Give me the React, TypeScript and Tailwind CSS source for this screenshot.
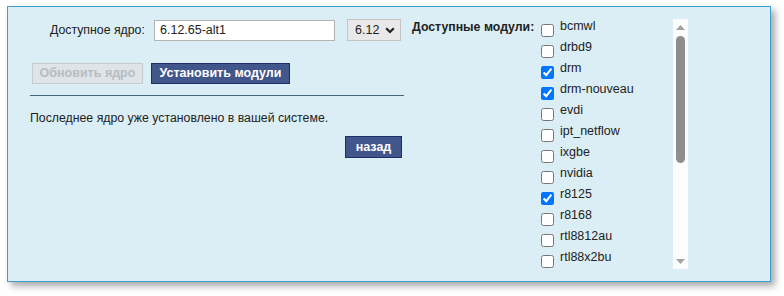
import { useState } from 'react'

const modules = [
  { name: 'bcmwl', on: false },
  { name: 'drbd9', on: false },
  { name: 'drm', on: true },
  { name: 'drm-nouveau', on: true },
  { name: 'evdi', on: false },
  { name: 'ipt_netflow', on: false },
  { name: 'ixgbe', on: false },
  { name: 'nvidia', on: false },
  { name: 'r8125', on: true },
  { name: 'r8168', on: false },
  { name: 'rtl8812au', on: false },
  { name: 'rtl88x2bu', on: false },
]

function Scrollbar() {
  return (
    <div className="flex w-[15px] shrink-0 flex-col items-center bg-[#fcfcfc]">
      <div className="flex h-[17px] w-full items-center justify-center">
        <svg width="9" height="5" viewBox="0 0 9 5"><path d="M4.5 0 L9 5 L0 5 Z" fill="#a3a3a3" /></svg>
      </div>
      <div className="flex-1 w-full px-[3px] pt-[1px] pb-[90px]">
        <div className="h-[127px] w-[9px] rounded-full bg-[#8e8e8e]" />
      </div>
      <div className="flex h-[17px] w-full items-center justify-center">
        <svg width="9" height="5" viewBox="0 0 9 5"><path d="M0 0 L9 0 L4.5 5 Z" fill="#a3a3a3" /></svg>
      </div>
    </div>
  )
}

export default function App() {
  const [checked, setChecked] = useState(modules.map((m) => m.on))

  return (
    <div className="h-[296px] w-[784px] bg-white pl-[7px] pt-[6px] font-['Liberation_Sans',Arial,sans-serif] text-[12.3px] text-[#222]">
      <div className="flex h-[276px] w-[764px] border border-[#3f9fd0] bg-[#dbeef5] shadow-[4px_4px_7px_rgba(0,0,0,0.35)]">
        {/* left column */}
        <div className="ml-[22px] mt-[12px] flex w-[374px] shrink-0 flex-col">
          <div className="flex h-[22px] items-center">
            <span className="ml-[20px] w-[104px] whitespace-nowrap">Доступное ядро:</span>
            <input
              type="text"
              defaultValue="6.12.65-alt1"
              className="h-[21px] w-[181px] border border-[#b3b3b3] bg-white px-[5px] text-[12.5px] text-[#222] outline-none"
            />
            <div className="ml-[12px] flex h-[22px] w-[54px] items-center gap-[6px] border border-[#c3c3c3] bg-[#e9e9e9] pl-[7px] text-[12.5px]">
              <span>6.12</span>
              <svg width="10" height="7" viewBox="0 0 10 7">
                <path d="M1.2 1.2 L5 5 L8.8 1.2" fill="none" stroke="#222" strokeWidth="2.2" />
              </svg>
            </div>
          </div>

          <div className="mt-[22px] flex gap-[8px] pl-[2px]">
            <button
              disabled
              className="h-[21px] w-[111px] whitespace-nowrap border border-[#c8cbce] bg-[#dfe4e8] text-[12.5px] font-bold text-[#b7bcc1]"
            >
              Обновить ядро
            </button>
            <button className="h-[21px] w-[139px] whitespace-nowrap border border-[#1e2e6b] bg-[#41568a] text-[12.5px] font-bold text-white">
              Установить модули
            </button>
          </div>

          <div className="mt-[11px] h-px w-[374px] bg-[#456579]" />

          <p className="mt-[15px] leading-[15px]">Последнее ядро уже установлено в вашей системе.</p>

          <div className="mt-[10px] flex justify-end pr-[2px]">
            <button className="h-[22px] w-[57px] border border-[#1e2e6b] bg-[#41568a] text-[12.5px] font-bold text-white">
              назад
            </button>
          </div>
        </div>

        {/* right column */}
        <div className="ml-[8px] mt-[12px] flex">
          <span className="mt-[1px] w-[125px] whitespace-nowrap font-bold leading-[15px]">Доступные модули:</span>
          <div className="flex h-[250px] w-[151px]">
            <div className="flex-1 overflow-hidden">
              {modules.map((m, i) => (
                <label key={m.name} className="flex h-[21px] items-start">
                  <input
                    type="checkbox"
                    checked={checked[i]}
                    onChange={() => setChecked(checked.map((c, j) => (j === i ? !c : c)))}
                    className="ml-[4px] mt-[5px] h-[13px] w-[13px] shrink-0"
                  />
                  <span className="ml-[6px] whitespace-nowrap text-[12.5px] leading-[15px]">{m.name}</span>
                </label>
              ))}
            </div>
            <Scrollbar />
          </div>
        </div>
      </div>
    </div>
  )
}
